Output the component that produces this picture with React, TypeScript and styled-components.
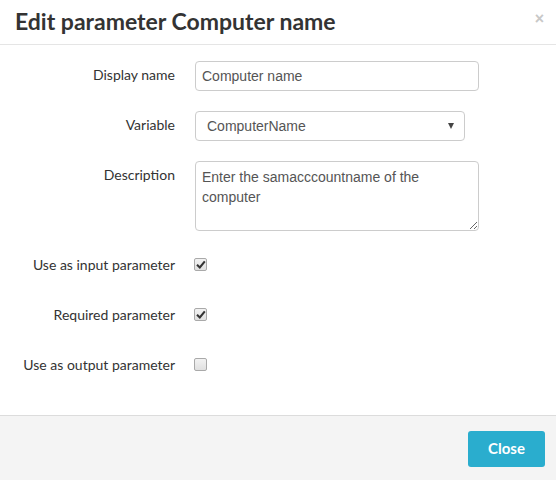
import React from 'react';
import styled, { createGlobalStyle } from 'styled-components';

const GlobalStyle = createGlobalStyle`
  html, body {
    margin: 0;
    padding: 0;
    background: #fff;
  }
  body {
    font-family: Lato, "Liberation Sans", sans-serif;
    color: #333;
  }
`;

const Dialog = styled.div`
  width: 556px;
  height: 480px;
  display: flex;
  flex-direction: column;
  background: #fff;
`;

const Header = styled.div`
  height: 44px;
  border-bottom: 1px solid #e5e5e5;
  display: flex;
  align-items: center;
  justify-content: space-between;
  padding: 0 12px 0 15px;
  box-sizing: content-box;
`;

const Title = styled.h4`
  margin: 0;
  font-family: Lato, sans-serif;
  font-weight: 700;
  font-size: 23px;
  line-height: 30px;
  color: #333;
  margin-top: -3px;
`;

const CloseX = styled.button`
  border: 0;
  background: none;
  padding: 0;
  font-family: "Liberation Sans", sans-serif;
  font-weight: 700;
  font-size: 16px;
  line-height: 16px;
  color: #c8c8c8;
  cursor: pointer;
  margin-top: -6px;
`;

const Body = styled.div`
  flex: 1;
  padding: 16px 0 0 0;
  display: flex;
  flex-direction: column;
  gap: 20px;
`;

const Row = styled.div`
  display: grid;
  grid-template-columns: 175px 1fr;
  column-gap: 20px;
  align-items: start;
`;

const Label = styled.label`
  text-align: right;
  font-family: Lato, sans-serif;
  font-size: 14px;
  line-height: 20px;
  padding-top: 4px;
  color: #333;
`;

const fieldBase = `
  box-sizing: border-box;
  border: 1px solid #ccc;
  border-radius: 4px;
  background: #fff;
  font-family: "Liberation Sans", Arial, sans-serif;
  font-size: 14px;
  color: #555;
  outline: none;
`;

const TextInput = styled.input`
  ${fieldBase}
  width: 284px;
  height: 30px;
  padding: 0 6px;
`;

const SelectBox = styled.div`
  ${fieldBase}
  width: 270px;
  height: 30px;
  padding: 0 10px 0 11px;
  display: flex;
  align-items: center;
  justify-content: space-between;
`;

const Caret = styled.span`
  width: 0;
  height: 0;
  border-left: 3.5px solid transparent;
  border-right: 3.5px solid transparent;
  border-top: 6px solid #444;
`;

const TextArea = styled.textarea`
  ${fieldBase}
  width: 284px;
  height: 70px;
  padding: 5px 6px;
  line-height: 20px;
  resize: vertical;
  display: block;
`;

const CheckRow = styled(Row)`
  min-height: 30px;
`;

const Box = styled.span<{ $checked: boolean }>`
  display: inline-flex;
  align-items: center;
  justify-content: center;
  width: 13px;
  height: 13px;
  box-sizing: border-box;
  margin-top: 7px;
  margin-left: -1px;
  border: 1px solid #a9a9a9;
  border-radius: 2px;
  background: linear-gradient(#f2f2f2, #e0e0e0);
`;

const Footer = styled.div`
  height: 65px;
  border-top: 1px solid #dcdcdc;
  background: #f4f4f4;
  display: flex;
  justify-content: flex-end;
  align-items: flex-start;
  padding: 15px 11px 0 0;
  box-sizing: border-box;
`;

const Button = styled.button`
  width: 77px;
  height: 36px;
  border: 0;
  border-radius: 3px;
  background: #2aadce;
  color: #fff;
  font-family: Lato, sans-serif;
  font-weight: 700;
  font-size: 15px;
  line-height: 20px;
  padding: 0 0 2px;
  cursor: pointer;
`;

const Check = ({ checked }: { checked: boolean }) => (
  <Box $checked={checked}>
    {checked && (
      <svg width="10" height="9" viewBox="0 0 10 9">
        <path d="M1 4.8 L3.8 7.4 L8.8 1.4" fill="none" stroke="#333" strokeWidth="2.1" />
      </svg>
    )}
  </Box>
);

export default function App() {
  return (
    <Dialog>
      <GlobalStyle />
      <Header>
        <Title>Edit parameter Computer name</Title>
        <CloseX aria-label="Close">×</CloseX>
      </Header>
      <Body>
        <Row>
          <Label>Display name</Label>
          <TextInput defaultValue="Computer name" />
        </Row>
        <Row>
          <Label>Variable</Label>
          <SelectBox>
            <span>ComputerName</span>
            <Caret />
          </SelectBox>
        </Row>
        <Row>
          <Label>Description</Label>
          <TextArea defaultValue="Enter the samacccountname of the computer" />
        </Row>
        <CheckRow>
          <Label>Use as input parameter</Label>
          <div><Check checked /></div>
        </CheckRow>
        <CheckRow>
          <Label>Required parameter</Label>
          <div><Check checked /></div>
        </CheckRow>
        <CheckRow>
          <Label>Use as output parameter</Label>
          <div><Check checked={false} /></div>
        </CheckRow>
      </Body>
      <Footer>
        <Button>Close</Button>
      </Footer>
    </Dialog>
  );
}
